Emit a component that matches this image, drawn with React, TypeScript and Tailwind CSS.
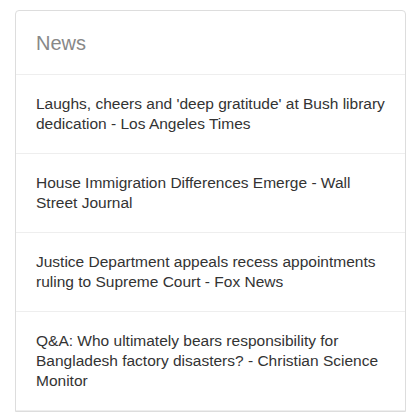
import React from 'react';

const headlines = [
  "Laughs, cheers and 'deep gratitude' at Bush library dedication - Los Angeles Times",
  'House Immigration Differences Emerge - Wall Street Journal',
  'Justice Department appeals recess appointments ruling to Supreme Court - Fox News',
  'Q&A: Who ultimately bears responsibility for Bangladesh factory disasters? - Christian Science Monitor',
];

const App: React.FC = () => {
  return (
    <div className="min-h-screen bg-white px-[15px] pt-[10px] font-['Liberation_Sans',Arial,sans-serif]">
      <div className="w-[391px] rounded-t-[4px] border border-[#dddddd] bg-white">
        {/* header */}
        <div className="border-b border-[#eeeeee] px-5 pt-[20px] pb-[19px]">
          <h2 className="text-[20px] leading-[24px] text-[#888888]">News</h2>
        </div>

        {headlines.map((title) => (
          <div
            key={title}
            className="border-b border-[#eeeeee] px-5 py-[19px] text-[15.5px] leading-[20px] text-[#333333]"
          >
            {title}
          </div>
        ))}
      </div>
    </div>
  );
};

export default App;
